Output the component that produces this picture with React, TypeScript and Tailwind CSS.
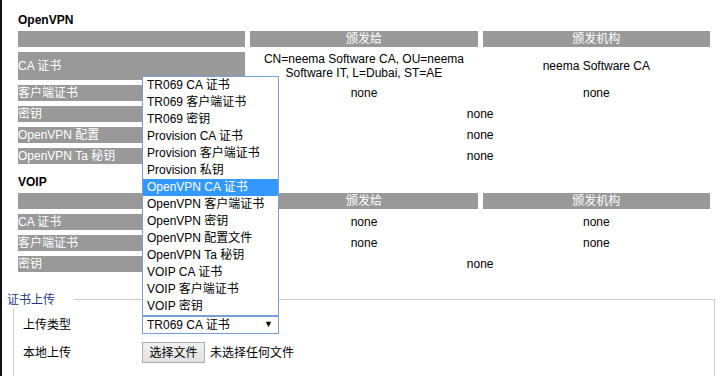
import React from "react";

const FONT = "'Liberation Sans', 'Noto Sans CJK SC', sans-serif";

type Row =
  | { label: string; a: React.ReactNode; b: React.ReactNode; h?: string }
  | { label: string; span: string; h?: string };

function CertTable({ rows }: { rows: Row[] }) {
  return (
    <div className="ml-[16px] grid w-[692px] grid-cols-3 gap-[5px] text-[12px]">
      <div className="h-[16px] bg-[#999999]" />
      <div className="flex h-[16px] items-center justify-center bg-[#999999] text-white">颁发给</div>
      <div className="flex h-[16px] items-center justify-center bg-[#999999] text-white">颁发机构</div>
      {rows.map((r, i) => (
        <React.Fragment key={i}>
          <div className={`flex items-center bg-[#999999] text-white ${r.h ?? "h-[16px]"}`}>{r.label}</div>
          {"span" in r ? (
            <div className={`col-span-2 flex items-center justify-center text-black ${r.h ?? "h-[16px]"}`}>{r.span}</div>
          ) : (
            <>
              <div className={`flex items-center justify-center text-center leading-[14px] text-black ${r.h ?? "h-[16px]"}`}>{r.a}</div>
              <div className={`flex items-center justify-center text-center text-black ${r.h ?? "h-[16px]"}`}>{r.b}</div>
            </>
          )}
        </React.Fragment>
      ))}
    </div>
  );
}

const options = [
  "TR069 CA 证书",
  "TR069 客户端证书",
  "TR069 密钥",
  "Provision CA 证书",
  "Provision 客户端证书",
  "Provision 私钥",
  "OpenVPN CA 证书",
  "OpenVPN 客户端证书",
  "OpenVPN 密钥",
  "OpenVPN 配置文件",
  "OpenVPN Ta 秘钥",
  "VOIP CA 证书",
  "VOIP 客户端证书",
  "VOIP 密钥",
];

export default function App() {
  return (
    <div className="flex h-[376px] w-[722px] overflow-hidden bg-white text-black" style={{ fontFamily: FONT }}>
      <div className="h-full w-[2px] shrink-0 bg-[#111111]" />
      <div className="flex-1 pt-[12px]">
        <div className="mb-[3px] ml-[16px] h-[16px] text-[12px] font-bold leading-[16px]">OpenVPN</div>
        <CertTable
          rows={[
            {
              label: "CA 证书",
              a: (
                <span>
                  CN=neema Software CA, OU=neema
                  <br />
                  Software IT, L=Dubai, ST=AE
                </span>
              ),
              b: "neema Software CA",
              h: "h-[28px]",
            },
            { label: "客户端证书", a: "none", b: "none" },
            { label: "密钥", span: "none" },
            { label: "OpenVPN 配置", span: "none" },
            { label: "OpenVPN Ta 秘钥", span: "none" },
          ]}
        />
        <div className="mb-[3px] ml-[16px] mt-[10px] h-[16px] text-[12px] font-bold leading-[16px]">VOIP</div>
        <CertTable
          rows={[
            { label: "CA 证书", a: "none", b: "none" },
            { label: "客户端证书", a: "none", b: "none" },
            { label: "密钥", span: "none" },
          ]}
        />
        <div className="relative ml-[11px] mt-[27px] h-[120px] w-[702px] border-l border-r border-t border-[#cccccc] pl-[9px] pt-[16px] text-[12px]">
          <div className="absolute left-[-8px] top-[-8px] flex h-[16px] w-[68px] items-center bg-white pl-[1px] text-[12px] text-[#2b3a8c]">
            证书上传
          </div>
          <div className="flex h-[18px] items-center">
            <div className="w-[119px]">上传类型</div>
            <div className="relative">
              <div className="absolute bottom-full left-0 z-10 w-[137px] border border-[#7a9fd6] bg-white">
                {options.map((o, i) => (
                  <div
                    key={o}
                    className={`h-[17px] pl-[4px] leading-[17px] ${i === 6 ? "bg-[#3399ff] text-white" : "text-black"}`}
                  >
                    {o}
                  </div>
                ))}
              </div>
              <div className="flex h-[18px] w-[137px] items-center justify-between border border-[#7a9fd6] bg-white pl-[4px] pr-[5px]">
                <span>TR069 CA 证书</span>
                <span className="text-[9px]">▼</span>
              </div>
            </div>
          </div>
          <div className="mt-[8px] flex h-[21px] items-center">
            <div className="w-[119px]">本地上传</div>
            <div className="flex h-[21px] w-[63px] items-center justify-center border border-[#adadad] bg-gradient-to-b from-[#f0f0f0] to-[#e1e1e1] text-black">
              选择文件
            </div>
            <span className="ml-[5px]">未选择任何文件</span>
          </div>
        </div>
      </div>
    </div>
  );
}
